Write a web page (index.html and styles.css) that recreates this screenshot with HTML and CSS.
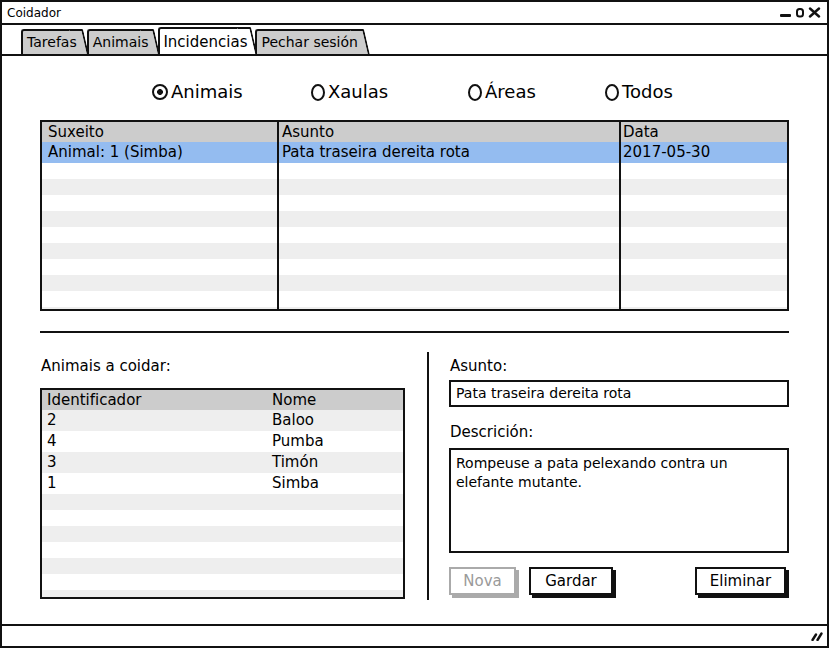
FILE: index.html
```html
<!DOCTYPE html>
<html lang="gl">
<head>
<meta charset="utf-8">
<title>Coidador</title>
<link rel="stylesheet" href="styles.css">
</head>
<body>
<div class="window">
  <header class="titlebar">
    <span class="title">Coidador</span>
    <svg class="winctl" width="42" height="11" viewBox="0 0 42 11">
      <rect x="0" y="7" width="11" height="3" rx="1" fill="#111"/>
      <rect x="17" y="2" width="6" height="7.5" rx="2.5" fill="none" stroke="#111" stroke-width="2"/>
      <path d="M30 1.5 L39 9.5 M39 1.5 L30 9.5" stroke="#111" stroke-width="2.4" stroke-linecap="round"/>
    </svg>
  </header>
  <nav class="tabs">
    <div class="tab">Tarefas</div>
    <div class="tab">Animais</div>
    <div class="tab active">Incidencias</div>
    <div class="tab">Pechar sesión</div>
  </nav>
  <main class="content">
    <div class="radios">
      <span class="radio checked">Animais</span>
      <span class="radio">Xaulas</span>
      <span class="radio">Áreas</span>
      <span class="radio">Todos</span>
    </div>
    <div class="grid">
      <div class="col c1">
        <div class="hd">Suxeito</div>
        <div class="sel">Animal: 1 (Simba)</div>
        <div class="fill"></div>
      </div>
      <div class="col c2">
        <div class="hd">Asunto</div>
        <div class="sel">Pata traseira dereita rota</div>
        <div class="fill"></div>
      </div>
      <div class="col c3">
        <div class="hd">Data</div>
        <div class="sel">2017-05-30</div>
        <div class="fill"></div>
      </div>
    </div>
    <div class="sep"></div>
    <div class="lower">
      <section class="left">
        <div class="label">Animais a coidar:</div>
        <div class="list">
          <div class="lrow lhead"><span class="id">Identificador</span><span>Nome</span></div>
          <div class="lrow odd"><span class="id">2</span><span>Baloo</span></div>
          <div class="lrow"><span class="id">4</span><span>Pumba</span></div>
          <div class="lrow odd"><span class="id">3</span><span>Timón</span></div>
          <div class="lrow"><span class="id">1</span><span>Simba</span></div>
          <div class="lfill"></div>
        </div>
      </section>
      <div class="vline"></div>
      <section class="right">
        <div class="label">Asunto:</div>
        <div class="field">Pata traseira dereita rota</div>
        <div class="label l2">Descrición:</div>
        <div class="area">Rompeuse a pata pelexando contra un<br>elefante mutante.</div>
        <div class="buttons">
          <div class="btn disabled nova">Nova</div>
          <div class="btn gardar">Gardar</div>
          <div class="btn eliminar">Eliminar</div>
        </div>
      </section>
    </div>
  </main>
  <footer class="status">
    <svg class="grip" width="12" height="9" viewBox="0 0 12 9">
      <path d="M1.5 8 L5 2.5 M6.5 8 L10.5 1.5" stroke="#111" stroke-width="2.4" stroke-linecap="round"/>
    </svg>
  </footer>
</div>
</body>
</html>
```

FILE: styles.css
```css
* { box-sizing: border-box; }

body {
  margin: 0;
  background: #fff;
  color: #000;
  font-family: "DejaVu Sans", "Liberation Sans", sans-serif;
}

.window {
  width: 829px;
  height: 648px;
  border: 2px solid #111;
  display: flex;
  flex-direction: column;
}

.titlebar {
  height: 23px;
  flex: none;
  border-bottom: 2px solid #111;
  display: flex;
  align-items: center;
  justify-content: space-between;
  padding: 0 5px;
  font-size: 12px;
}

.tabs {
  height: 31px;
  flex: none;
  border-bottom: 2px solid #111;
  display: flex;
  align-items: flex-end;
  padding-left: 19px;
}

.tab {
  position: relative;
  z-index: 1;
  height: 25px;
  margin-right: 5px;
  padding: 0 5px 0 4px;
  background: #ccc;
  border: 2px solid #111;
  border-right: 0;
  border-bottom: 0;
  border-top-left-radius: 3px;
  font-size: 14px;
  line-height: 23px;
  white-space: nowrap;
}

.tab::after {
  content: "";
  position: absolute;
  z-index: -1;
  top: -2px;
  bottom: 0;
  right: -1px;
  width: 12px;
  background: inherit;
  border-top: 2px solid #111;
  border-right: 2px solid #111;
  border-top-right-radius: 2px;
  transform: skewX(13deg);
  transform-origin: top left;
}

.tab.active {
  z-index: 2;
  height: 27px;
  background: #fff;
  font-size: 15px;
  line-height: 27px;
  padding: 0 3px 0 3px;
}

.content {
  flex: 1;
  padding: 0 38px;
}

.radios {
  display: grid;
  grid-template-columns: 159px 157px 137px auto;
  margin: 26px 0 0 112px;
  height: 20px;
  font-size: 18px;
  line-height: 20px;
}

.radio {
  display: flex;
  align-items: center;
  gap: 3px;
}

.radio::before {
  content: "";
  width: 10px;
  height: 13px;
  border: 2px solid #111;
  border-radius: 50%;
}

.radio.checked::before {
  width: 12px;
  height: 12px;
  background: radial-gradient(circle, #111 0 2.6px, transparent 3.2px);
}

.grid {
  margin-top: 18px;
  height: 191px;
  border: 2px solid #111;
  display: flex;
  font-size: 15px;
}

.col {
  display: flex;
  flex-direction: column;
  border-right: 2px solid #111;
}

.col.c1 { width: 237px; }
.col.c2 { width: 342px; }
.col.c3 { flex: 1; border-right: 0; }

.hd {
  height: 20px;
  line-height: 20px;
  background: #ccc;
}

.sel {
  height: 21px;
  line-height: 21px;
  background: #94bcf0;
  white-space: nowrap;
}

.c1 .hd, .c1 .sel { padding-left: 6px; }
.c2 .hd, .c2 .sel { padding-left: 3px; }
.c3 .hd, .c3 .sel { padding-left: 2px; }

.fill {
  flex: 1;
  background: repeating-linear-gradient(#fff 0 16px, #eee 16px 32px);
}

.sep {
  margin-top: 20px;
  height: 2px;
  background: #111;
}

.lower {
  margin-top: 19px;
  height: 248px;
  display: flex;
}

.left { width: 365px; }

.label {
  margin-top: 4px;
  font-size: 15px;
  line-height: 20px;
  padding-left: 1px;
}

.list {
  margin-top: 12px;
  height: 211px;
  border: 2px solid #111;
  display: flex;
  flex-direction: column;
  font-size: 15px;
}

.lrow {
  display: flex;
  height: 21px;
  line-height: 21px;
  flex: none;
}

.lrow.lhead {
  height: 20px;
  line-height: 20px;
  background: #ccc;
}

.lrow.odd { background: #eee; }

.lrow .id {
  width: 230px;
  padding-left: 5px;
}

.lfill {
  flex: 1;
  background: repeating-linear-gradient(#eee 0 16px, #fff 16px 32px);
}

.vline {
  width: 2px;
  background: #111;
  margin: 0 20px 0 22px;
}

.right { flex: 1; }

.right .label { padding-left: 1px; }

.field {
  margin-top: 4px;
  height: 27px;
  border: 2px solid #111;
  font-size: 14px;
  line-height: 23px;
  padding-left: 5px;
}

.label.l2 { margin-top: 15px; }

.area {
  margin-top: 6px;
  height: 105px;
  border: 2px solid #111;
  font-size: 14px;
  line-height: 19px;
  padding: 4px 5px;
}

.buttons {
  display: flex;
  margin-top: 14px;
}

.btn {
  height: 28px;
  border: 2px solid #111;
  box-shadow: 3px 3px 0 #111;
  font-size: 15px;
  line-height: 24px;
  text-align: center;
  background: #fff;
}

.btn.nova { width: 67px; }
.btn.gardar { width: 84px; margin-left: 13px; }
.btn.eliminar { width: 91px; margin-left: auto; margin-right: 3px; }

.btn.disabled {
  border-color: #aaa;
  color: #9a9a9a;
  box-shadow: 3px 3px 0 #aaa;
}

.status {
  height: 22px;
  flex: none;
  border-top: 2px solid #111;
  display: flex;
  align-items: center;
  justify-content: flex-end;
  padding-right: 4px;
}
```
